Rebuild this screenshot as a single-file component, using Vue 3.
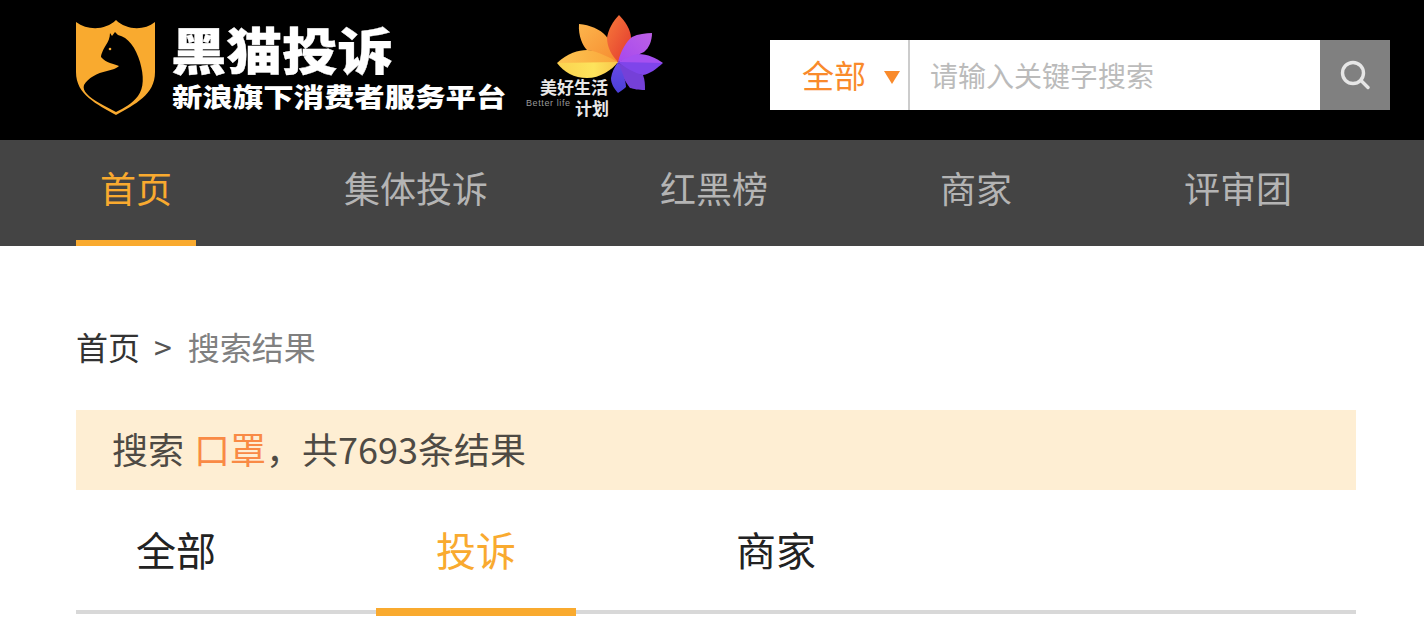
<script setup>
const navItems = [
  { label: '首页', cls: 'n1', active: true },
  { label: '集体投诉', cls: 'n2' },
  { label: '红黑榜', cls: 'n3' },
  { label: '商家', cls: 'n4' },
  { label: '评审团', cls: 'n5' },
]
const tabs = [
  { label: '全部' },
  { label: '投诉', active: true },
  { label: '商家' },
]
</script>

<template>
  <div class="page">
    <header class="header">
      <svg class="shield" viewBox="76 20 80 96" width="80" height="96" aria-hidden="true">
        <path d="M76 22C88 31 106 30 116 20C126 30 144 31 155 22V72C155 95 135 104 116 115C97 104 76 95 76 72Z" fill="#f9aa2f" />
        <path d="M110 33L112 36L115 32L118 35C128 37 136 48 140 62C144 76 144 88 138 96C132 104 124 108 116 112C105 106 92 100 87 94C84 91 83 88 84 85C88 78 97 73 107 71C112 70 117 68 119 66C114 64 106 63 101 57C101 54 104 48 106 45C108 42 110 38 110 33Z" fill="#000" />
        <circle cx="110" cy="49" r="1.3" fill="#f9aa2f" />
      </svg>
      <div class="brand">
        <div class="brand-title">黑猫投诉</div>
        <div class="brand-sub">新浪旗下消费者服务平台</div>
      </div>
      <svg class="flower" viewBox="526 10 140 110" width="140" height="110" aria-hidden="true">
        <defs>
          <linearGradient id="gL" x1="0" y1="0" x2="1" y2="0"><stop offset="0" stop-color="#fdc552" /><stop offset="1" stop-color="#f9a53a" /></linearGradient>
          <linearGradient id="gY" x1="0" y1="0" x2="1" y2="0"><stop offset="0" stop-color="#fbd24f" /><stop offset=".6" stop-color="#fde35c" /><stop offset="1" stop-color="#f8c64a" /></linearGradient>
          <linearGradient id="gO" x1="0" y1="0" x2="1" y2="1"><stop offset="0" stop-color="#fcb54c" /><stop offset="1" stop-color="#f68b30" /></linearGradient>
          <linearGradient id="gR" x1="0" y1="0" x2="1" y2="1"><stop offset="0" stop-color="#f77a3a" /><stop offset="1" stop-color="#e2382f" /></linearGradient>
          <linearGradient id="gP" x1="1" y1="0" x2="0" y2="1"><stop offset="0" stop-color="#bc60e6" /><stop offset="1" stop-color="#a648ee" /></linearGradient>
          <linearGradient id="gB" x1="0" y1="0" x2="0" y2="1"><stop offset="0" stop-color="#6a4ae8" /><stop offset="1" stop-color="#4a3fd8" /></linearGradient>
        </defs>
        <path d="M557 63C568 53 578 50 587 50C600 50 610 55 618 62L618 63Z" fill="url(#gL)" />
        <path d="M557 63L618 62C612 70 600 78 587 78C574 78 564 72 557 63Z" fill="url(#gY)" />
        <path d="M618 62C610 58 598 51 587 50C583 46 578 36 579 24C590 25 600 29 606 36C612 44 616 52 618 62Z" fill="url(#gO)" />
        <path d="M618 62C612 56 607 47 607 38C608 30 613 21 619 15C625 21 631 30 631 38C631 47 625 56 618 62Z" fill="url(#gR)" />
        <path d="M618 62C621 50 626 42 632 37C638 34 646 33 652 33C652 41 649 48 644 52C636 56 628 59 618 62Z" fill="url(#gP)" />
        <path d="M618 62C626 58 632 55 638 54C648 54 656 58 663 63L618 63Z" fill="#a650f0" />
        <path d="M618 62L663 63C656 69 650 74 643 75C634 75 626 70 618 62Z" fill="#7f45ea" />
        <path d="M618 62C626 68 634 73 643 75C645 80 645 85 645 90C638 90 634 89 630 88C624 80 620 72 618 62Z" fill="#7540d8" />
        <path d="M618 62C622 72 626 80 626 87C624 89 621 91 618 93C614 88 611 84 611 78C612 72 614 68 618 62Z" fill="url(#gB)" />
        <text x="540" y="94" class="fl-cn">美好生活</text>
        <text x="526" y="106" class="fl-en">Better life</text>
        <text x="575" y="115" class="fl-cn">计划</text>
      </svg>
      <div class="search">
        <div class="scope">
          <span class="scope-text">全部</span>
          <i class="caret"></i>
        </div>
        <div class="field">请输入关键字搜索</div>
        <div class="sbtn">
          <svg viewBox="0 0 30 30" width="30" height="30" aria-hidden="true">
            <circle cx="13" cy="13" r="10.5" fill="none" stroke="#e6e6e6" stroke-width="3.4" />
            <path d="M21 20.5L28 27.5" stroke="#e6e6e6" stroke-width="3.4" stroke-linecap="round" />
          </svg>
        </div>
      </div>
    </header>

    <nav class="nav">
      <a v-for="n in navItems" :key="n.label" class="nav-item" :class="[n.cls, { on: n.active }]">{{ n.label }}</a>
    </nav>

    <main class="main">
      <div class="crumb"><span class="c1">首页</span><span class="sep">&gt;</span><span class="c2">搜索结果</span></div>
      <div class="banner">
        <span>搜索</span>
        <span class="kw">口罩</span><span class="rest">，共7693条结果</span>
      </div>
      <div class="tabs">
        <div v-for="t in tabs" :key="t.label" class="tab" :class="{ on: t.active }">{{ t.label }}</div>
      </div>
    </main>
  </div>
</template>

<style>
html, body { margin: 0; background: #fff; }
</style>

<style scoped>
.page { width: 1424px; height: 630px; overflow: hidden; font-family: "Noto Sans CJK SC", "Noto Sans", sans-serif; }
.header { height: 140px; background: #000; display: flex; align-items: flex-start; padding-left: 76px; box-sizing: border-box; }
.shield { margin-top: 20px; flex: none; }
.brand { margin: 20px 0 0 15px; width: 335px; color: #fff; flex: none; }
.brand-title { font-size: 55.5px; height: 56px; line-height: 56px; font-weight: 900; -webkit-text-stroke: .4px #fff; transform: scaleY(.9); transform-origin: 0 50%; white-space: nowrap; }
.brand-sub { font-size: 30.4px; height: 32px; line-height: 32px; font-weight: 900; margin-top: 4px; padding-left: 1px; white-space: nowrap; transform: scaleY(.85); transform-origin: 0 50%; }
.flower { margin: 10px 0 0 20px; flex: none; }
.fl-cn { font-size: 17px; fill: #e8e8e8; font-weight: 700; }
.fl-en { font-size: 9px; fill: #999; font-family: "Liberation Sans", sans-serif; letter-spacing: .6px; }
.search { margin: 40px 0 0 104px; width: 620px; height: 70px; background: #fff; display: flex; flex: none; }
.scope { width: 140px; display: flex; align-items: center; color: #f98a2b; font-size: 32px; padding-left: 32px; box-sizing: border-box; border-right: 2px solid #ccc; }
.scope-text { position: relative; top: -1px; }
.caret { width: 0; height: 0; border-left: 8px solid transparent; border-right: 8px solid transparent; border-top: 13px solid #f98a2b; margin-left: 18px; margin-top: 4px; }
.field { flex: 1; font-size: 28px; color: #bbb; line-height: 70px; padding-left: 20px; }
.sbtn { width: 70px; background: #808080; display: flex; align-items: center; justify-content: center; }
.nav { height: 106px; background: #444; display: flex; padding-left: 76px; box-sizing: border-box; }
.nav-item { height: 106px; line-height: 95px; box-sizing: border-box; padding: 0 24px; font-size: 36px; color: #b4b4b4; flex: none; }
.nav-item.on { color: #f9aa2f; border-bottom: 6px solid #f9aa2f; }
.n2 { margin-left: 124px; }
.n3 { margin-left: 148px; padding: 0; }
.n4 { margin-left: 172px; padding: 0; }
.n5 { margin-left: 172px; padding: 0; }
.main { padding: 0 68px 0 76px; }
.crumb { margin-top: 78px; height: 44px; line-height: 44px; font-size: 32px; display: flex; }
.c1 { color: #333; }
.sep { color: #555; margin: 0 16px 0 14px; }
.c2 { color: #808080; }
.banner { margin-top: 42px; height: 80px; line-height: 76px; background: #feeed3; padding-left: 36px; font-size: 36px; color: #4e4a44; display: flex; }
.kw { color: #f98a45; margin-left: 10px; }
.tabs { display: flex; height: 124px; box-sizing: border-box; border-bottom: 4px solid #d8d8d8; gap: 100px; }
.tab { width: 200px; height: 126px; box-sizing: border-box; text-align: center; font-size: 40px; line-height: 118px; color: #222; }
.tab.on { color: #f9aa2f; border-bottom: 8px solid #f9aa2f; }
</style>
